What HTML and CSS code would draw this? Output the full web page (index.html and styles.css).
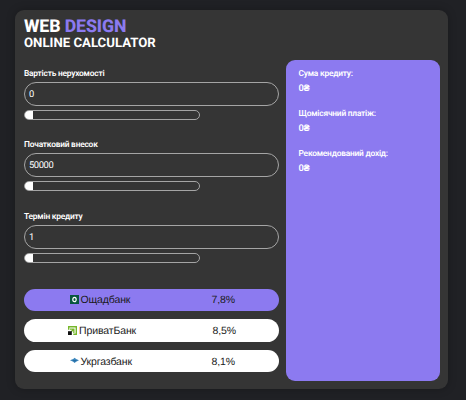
FILE: index.html
```html
<!DOCTYPE html>
<html lang="uk">
<head>
<meta charset="utf-8">
<title>Web Design Calculator</title>
<link rel="stylesheet" href="styles.css">
</head>
<body>
<main class="card">
  <h1 class="title">WEB <span class="accent">DESIGN</span></h1>
  <h2 class="subtitle">ONLINE CALCULATOR</h2>
  <div class="columns">
    <section class="form">
      <div class="field">
        <label class="label">Вартість нерухомості</label>
        <div class="input">0</div>
        <div class="range"></div>
      </div>
      <div class="field">
        <label class="label">Початковий внесок</label>
        <div class="input">50000</div>
        <div class="range"></div>
      </div>
      <div class="field">
        <label class="label">Термін кредиту</label>
        <div class="input">1</div>
        <div class="range"></div>
      </div>
      <div class="banks">
        <div class="bank active">
          <div class="name"><svg class="icon" viewBox="0 0 9 9"><path fill="#07563f" d="M0 0h9v9H0z"/><ellipse cx="4.5" cy="4.5" rx="1.7" ry="2.2" fill="none" stroke="#fff" stroke-width="1.2"/></svg><span>Ощадбанк</span></div>
          <div class="rate">7,8%</div>
        </div>
        <div class="bank">
          <div class="name privat"><svg class="icon" viewBox="0 0 9 9"><path fill="#76b72a" d="M0 0h9v9H5.3V7.6h2.3V1.4H1.4v2.3H0z"/><path fill="#76b72a" d="M2 2.5h4.5V7H5.2V4.8L3.6 6.2 2.7 5.3 4.2 3.8H2z"/><path fill="#111" d="M0 5.2h3.8V9H0z"/></svg><span>ПриватБанк</span></div>
          <div class="rate shifted">8,5%</div>
        </div>
        <div class="bank">
          <div class="name"><svg class="icon" viewBox="0 0 9 9"><path fill="#3d87bd" d="M0 4.3 3.2 3 4.6 1.7 6.1 3 9 4.3 6.1 5.7 4.6 7 3.2 5.7z"/><path fill="#1c639b" d="M2 4.2h5.5L4.6 5.6z"/></svg><span>Укргазбанк</span></div>
          <div class="rate">8,1%</div>
        </div>
      </div>
    </section>
    <aside class="results">
      <div class="result"><div>Сума кредиту:</div><div class="value">0₴</div></div>
      <div class="result"><div>Щомісячний платіж:</div><div class="value">0₴</div></div>
      <div class="result"><div>Рекомендований дохід:</div><div class="value">0₴</div></div>
    </aside>
  </div>
</main>
</body>
</html>
```
FILE: styles.css
```css
* { box-sizing: border-box; }
body {
  margin: 0;
  height: 400px;
  overflow: hidden;
  padding: 10px 18px 0 15px;
  background: #202125;
  color: #fff;
  font-family: Roboto, "Liberation Sans", sans-serif;
  text-rendering: geometricPrecision;
}
.card {
  height: 379px;
  padding: 8px 8.5px 0 9px;
  border-radius: 9px;
  background: #353535;
  box-shadow: 0 0 8px rgba(0, 0, 0, .25);
}
.title {
  margin: 0;
  font-size: 17.7px;
  line-height: 19px;
  font-weight: 800;
  letter-spacing: -.1px;
  white-space: nowrap;
}
.accent { color: #8c7af0; }
.subtitle {
  margin: 0;
  font-size: 13.2px;
  line-height: 14px;
  font-weight: 700;
  white-space: nowrap;
}
.columns { display: flex; justify-content: space-between; margin-top: 8.5px; }
.form { width: 255px; padding-top: 9px; }
.field { height: 71.9px; }
.label {
  display: block;
  height: 13px;
  font-size: 8.4px;
  line-height: 11px;
  font-weight: 600;
  letter-spacing: -.22px;
  white-space: nowrap;
}
.input {
  height: 24px;
  padding-left: 4px;
  border: 1px solid #a5a5a5;
  border-radius: 12px;
  font-size: 9.4px;
  line-height: 23px;
  letter-spacing: -.4px;
}
.range {
  width: 176px;
  height: 10px;
  margin-top: 4px;
  border: 1px solid #a5a5a5;
  border-radius: 5px;
  background: linear-gradient(90deg, #fff 9px, transparent 9px) border-box;
}
.banks { display: grid; gap: 8px; margin-top: 4.5px; }
.bank {
  display: flex;
  align-items: center;
  height: 22.6px;
  padding-left: 45.5px;
  border-radius: 12px;
  background: #fff;
  color: #1a1a1a;
  font-family: "Liberation Sans", sans-serif;
  font-size: 10.5px;
  letter-spacing: -.12px;
}
.active { background: #8c7af0; }
.name { display: flex; align-items: center; gap: 2px; width: 142px; white-space: nowrap; }
.name span, .rate { padding-top: 1px; }
.privat { margin-left: -1.5px; }
.icon { width: 9px; height: 9px; margin-top: -1px; }
.shifted { margin-left: 2.5px; }
.results {
  width: 154px;
  height: 321px;
  padding: 8px 13px;
  border-radius: 9px;
  background: #8c7af0;
  font-size: 8.4px;
  line-height: 12px;
  font-weight: 600;
  letter-spacing: -.22px;
  white-space: nowrap;
}
.result { height: 40.3px; }
.value { margin-top: 2px; font-size: 9.3px; line-height: 13px; }
```
